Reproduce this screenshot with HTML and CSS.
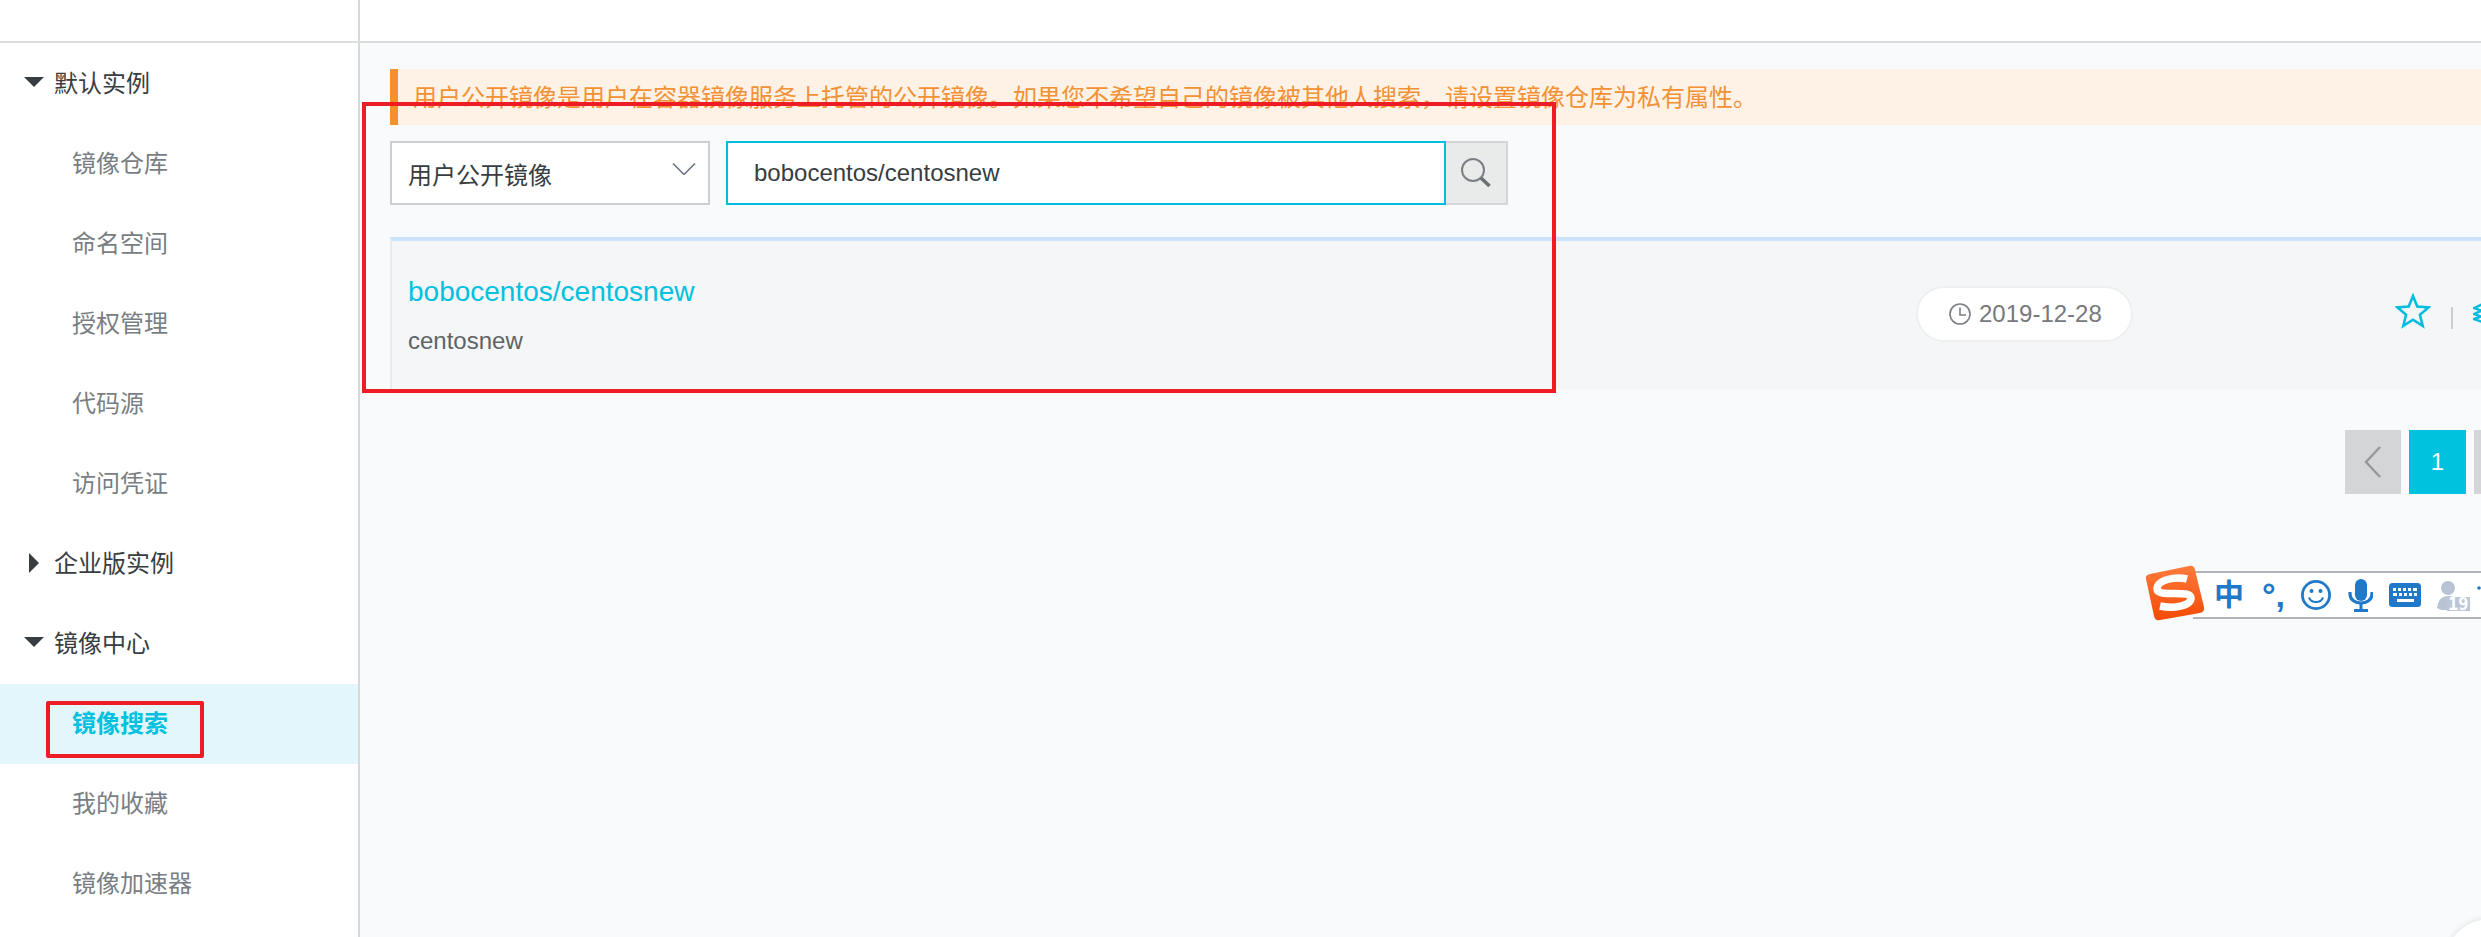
FILE: index.html
```html
<!DOCTYPE html>
<html lang="zh-CN">
<head>
<meta charset="utf-8">
<title>镜像搜索</title>
<link rel="stylesheet" href="styles.css">
</head>
<body>
<div class="page">
  <header class="topbar"><div class="topbar-side"></div></header>
  <div class="layout">
    <nav class="sidebar">
      <div class="nav-group"><span class="tri tri-down"></span>默认实例</div>
      <a class="nav-item">镜像仓库</a>
      <a class="nav-item">命名空间</a>
      <a class="nav-item">授权管理</a>
      <a class="nav-item">代码源</a>
      <a class="nav-item">访问凭证</a>
      <div class="nav-group"><span class="tri tri-right"></span>企业版实例</div>
      <div class="nav-group"><span class="tri tri-down"></span>镜像中心</div>
      <a class="nav-item nav-active">镜像搜索</a>
      <a class="nav-item">我的收藏</a>
      <a class="nav-item">镜像加速器</a>
    </nav>
    <main class="main">
      <div class="alert">用户公开镜像是用户在容器镜像服务上托管的公开镜像。如果您不希望自己的镜像被其他人搜索，请设置镜像仓库为私有属性。</div>
      <div class="search">
        <div class="select">用户公开镜像
          <svg class="chevron" width="24" height="12" viewBox="0 0 24 12"><path d="M1 .5 12 11.5 23 .5" fill="none" stroke="#6d7781" stroke-width="1.6"/></svg>
        </div>
        <div class="input">bobocentos/centosnew</div>
        <div class="search-btn">
          <svg width="30" height="30" viewBox="0 0 30 30"><circle cx="12" cy="12" r="11" fill="none" stroke="#7b8085" stroke-width="2"/><path d="M20 20 28.5 28" fill="none" stroke="#6b7075" stroke-width="3.6"/></svg>
        </div>
      </div>
      <section class="card">
        <div class="card-info">
          <div class="card-title">bobocentos/centosnew</div>
          <div class="card-desc">centosnew</div>
        </div>
        <div class="pill">
          <svg width="22" height="22" viewBox="0 0 22 22"><circle cx="11" cy="11" r="10" fill="none" stroke="#7b7f84" stroke-width="1.6"/><path d="M11 4.5V12H17" fill="none" stroke="#7b7f84" stroke-width="1.6"/></svg>
          2019-12-28
        </div>
        <svg class="star" width="36" height="36" viewBox="0 0 36 36"><path d="M18 3 22.3 13.6 33.6 14.4 24.9 21.7 27.7 32.8 18 26.7 8.3 32.8 11.1 21.7 2.4 14.4 13.7 13.6Z" fill="none" stroke="#00bde0" stroke-width="2.6"/></svg>
        <span class="sep"></span>
        <svg class="layers" width="24" height="22" viewBox="0 0 24 22"><path d="M12 1 1 6 12 10M12 7 1 12 12 16M12 13 1 17 12 21" fill="none" stroke="#00bde0" stroke-width="2.4"/></svg>
      </section>
      <div class="pager">
        <div class="page-btn">
          <svg width="18" height="32" viewBox="0 0 18 32"><path d="M16 1 2 16 16 31" fill="none" stroke="#96989b" stroke-width="2.4"/></svg>
        </div>
        <div class="page-btn page-current">1</div>
        <div class="page-btn"></div>
      </div>
    </main>
  </div>

  <div class="mark mark-search"></div>
  <div class="mark mark-nav"></div>

  <div class="ime">
    <svg class="ime-logo" width="60" height="58" viewBox="0 0 60 58">
      <defs><linearGradient id="imeg" x1="0" y1="0" x2="0" y2="1"><stop offset="0" stop-color="#ff7b3c"/><stop offset="1" stop-color="#f44a05"/></linearGradient></defs>
      <path d="M5 9 44 1Q49 0 50 5L59 42Q60 47 55 48L15 55Q10 56 9 51L1 14Q0 10 5 9Z" fill="url(#imeg)"/>
      <path d="M42 14C30 11 12 15 12 24C12 33 46 24 46 33C46 41 28 44 15 41" fill="none" stroke="#fff" stroke-width="7.5"/>
    </svg>
    <span class="ime-zh">中</span>
    <span class="ime-punct">°,</span>
    <svg width="30" height="30" viewBox="0 0 30 30"><circle cx="15" cy="15" r="13.6" fill="none" stroke="#1f78c8" stroke-width="2.8"/><circle cx="10.5" cy="11" r="2" fill="#1f78c8"/><circle cx="19.5" cy="11" r="2" fill="#1f78c8"/><path d="M8 17.5C10 23.5 20 23.5 22 17.5" fill="none" stroke="#1f78c8" stroke-width="2.2"/></svg>
    <svg width="26" height="33" viewBox="0 0 26 33"><rect x="8" y="0" width="12" height="22" rx="6" fill="#1f78c8"/><path d="M3 13V15C3 27 25 27 25 15V13" fill="none" stroke="#1f78c8" stroke-width="3.2"/><path d="M14 24V31M7 31.5H21" stroke="#1f78c8" stroke-width="3" fill="none"/></svg>
    <svg width="32" height="24" viewBox="0 0 32 24"><rect width="32" height="24" rx="3.5" fill="#1f78c8"/><path d="M4 5h3v3H4zM9 5h3v3H9zM14 5h3v3h-3zM19 5h3v3h-3zM24 5h4v3h-4zM4 10h4v3H4zM10 10h3v3h-3zM15 10h3v3h-3zM20 10h3v3h-3zM25 10h3v3h-3zM8 16h17v3H8z" fill="#fff"/></svg>
    <svg width="44" height="44" viewBox="0 -6 44 44">
      <circle cx="11" cy="9" r="7" fill="#b8c3d6"/>
      <path d="M0 29C1 21 5 17 11 17C15 17 18 18 20 20V31H4Z" fill="#b8c3d6"/>
      <rect x="10" y="18" width="23" height="14" fill="#bcc6d7"/>
      <text class="ime-count" x="11" y="31">19</text>
      <circle cx="42" cy="9" r="1.8" fill="#1f78c8"/>
    </svg>
  </div>
  <div class="corner-btn"></div>
</div>
</body>
</html>
```

FILE: styles.css
```css
* { box-sizing: border-box; }
html, body { margin: 0; padding: 0; height: 100%; }
body {
  font-family: "Liberation Sans", "Noto Sans CJK SC", sans-serif;
  font-size: 24px;
  color: #373d41;
  background: #f9fafc;
  overflow: hidden;
}
.page { position: relative; width: 2481px; height: 937px; overflow: hidden; display: flex; flex-direction: column; }

.topbar { height: 43px; flex: none; background: #fff; border-bottom: 2px solid #dcdcdc; }
.topbar-side { width: 360px; height: 41px; border-right: 2px solid #d8d8d8; }

.layout { flex: 1; display: flex; min-height: 0; }

.sidebar { width: 360px; flex: none; padding-top: 1px; background: #fff; border-right: 2px solid #d8d8d8; }
.nav-group { position: relative; height: 80px; line-height: 80px; padding-left: 54px; color: #373d41; }
.nav-item { display: block; height: 80px; line-height: 80px; padding-left: 72px; color: #787e83; }
.nav-active { background: #e2f6fb; color: #00c1de; font-weight: 700; }
.tri { position: absolute; width: 0; height: 0; border-style: solid; }
.tri-down { left: 24px; top: 33px; border-width: 10px 10px 0; border-color: #373d41 transparent transparent; }
.tri-right { left: 29px; top: 29px; border-width: 10px 0 10px 10px; border-color: transparent transparent transparent #373d41; }

.main { flex: 1; min-width: 0; overflow: hidden; padding: 26px 0 0 30px; }

.alert {
  height: 56px;
  line-height: 57px;
  padding-left: 15px;
  border-left: 8px solid #f29130;
  background: #fef1e5;
  color: #f39235;
  white-space: nowrap;
}

.search { display: flex; height: 64px; margin-top: 16px; }
.select {
  width: 320px;
  margin-right: 16px;
  display: flex;
  align-items: center;
  justify-content: space-between;
  padding: 0 12px 0 16px;
  background: #fff;
  border: 2px solid #ccced1;
}
.chevron { margin-top: -8px; }
.input {
  width: 720px;
  padding-left: 26px;
  line-height: 60px;
  background: #fff;
  border: 2px solid #00bde0;
}
.search-btn {
  width: 62px;
  display: flex;
  align-items: center;
  justify-content: center;
  background: #e9eaea;
  border: 2px solid #d3d5d7;
  border-left: 0;
}

.card {
  display: flex;
  align-items: flex-start;
  height: 153px;
  margin-top: 32px;
  padding-left: 16px;
  background: #f5f6f8;
  border-top: 4px solid #cce4fb;
  border-left: 2px solid #e8eaed;
}
.card-info { width: 1508px; flex: none; padding-top: 33px; }
.card-title { height: 36px; line-height: 36px; font-size: 28px; color: #00c1de; }
.card-desc { height: 34px; line-height: 34px; margin-top: 14px; color: #5f6367; }
.pill {
  flex: none;
  display: flex;
  align-items: center;
  gap: 8px;
  width: 217px;
  height: 56px;
  margin-top: 45px;
  padding-left: 31px;
  background: #fff;
  border: 2px solid #eeeff0;
  border-radius: 28px;
  color: #76797d;
}
.star { flex: none; margin: 52px 0 0 262px; }
.sep { flex: none; width: 2px; height: 22px; margin: 66px 0 0 20px; background: #cfcdcb; }
.layers { flex: none; margin: 61px 0 0 20px; }

.pager { display: flex; gap: 8px; margin-top: 40px; padding-left: 1955px; }
.page-btn {
  flex: none;
  display: flex;
  align-items: center;
  justify-content: center;
  width: 56px;
  height: 64px;
  background: #d4d5d7;
}
.page-current { width: 57px; background: #00c1de; color: #fff; font-size: 24px; }

.mark { position: absolute; border: 4px solid #ee1c25; }
.mark-search { left: 362px; top: 102px; width: 1194px; height: 291px; }
.mark-nav { left: 46px; top: 701px; width: 158px; height: 57px; border-radius: 2px; }

.ime {
  position: absolute;
  left: 2193px;
  right: 0;
  top: 571px;
  height: 48px;
  display: flex;
  align-items: center;
  gap: 16px;
  padding-left: 21px;
  background: #fff;
  border-top: 2px solid #b0b3b8;
  border-bottom: 2px solid #b0b3b8;
  white-space: nowrap;
}
.ime-logo { position: absolute; left: -48px; top: -8px; }
.ime-zh { width: 28px; font-size: 30px; line-height: 36px; font-weight: 700; color: #1f78c8; text-align: center; }
.ime-punct { width: 27px; font-size: 34px; line-height: 36px; font-weight: 700; color: #1f78c8; text-align: right; }
.ime-count { font-family: "DejaVu Sans Mono", monospace; font-size: 17px; font-weight: 700; fill: #fff; }

.corner-btn {
  position: absolute;
  left: 2444px;
  top: 919px;
  width: 92px;
  height: 92px;
  border-radius: 50%;
  background: #fff;
  box-shadow: 0 0 6px rgba(0, 0, 0, .12);
}
```
